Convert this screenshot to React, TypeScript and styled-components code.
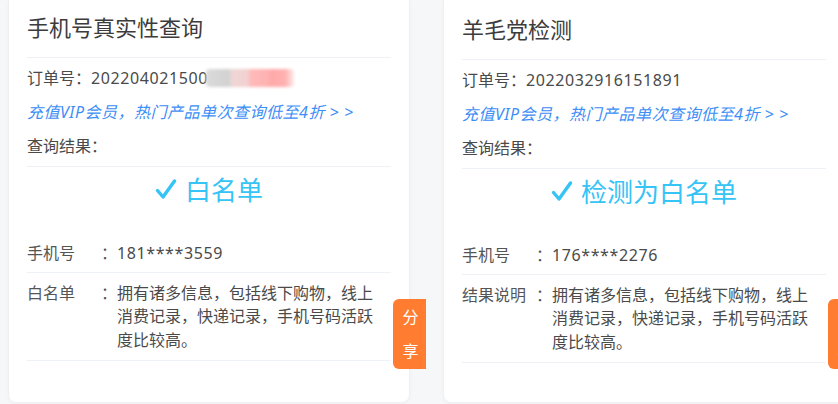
import React from "react";
import styled, { createGlobalStyle } from "styled-components";

const GlobalStyle = createGlobalStyle`
  html, body {
    margin: 0;
    padding: 0;
    background: #f6f7f9;
    overflow: hidden;
  }
  body {
    font-family: "Noto Sans", "Noto Sans CJK SC", sans-serif;
    color: #4a4a4a;
  }
`;

const Page = styled.div`
  display: flex;
  width: 838px;
  height: 404px;
  overflow: hidden;
`;

const Panel = styled.div<{ $width: number; $left: number }>`
  flex: 0 0 ${p => p.$width}px;
  padding-left: ${p => p.$left}px;
  box-sizing: border-box;
`;

const Card = styled.div<{ $shift: number }>`
  position: relative;
  width: 402px;
  height: 403px;
  box-sizing: border-box;
  padding: ${p => p.$shift}px 18px 0;
  background: #ffffff;
  border: 1px solid #eef0f4;
  border-top: none;
  border-radius: 0 0 8px 8px;
  box-shadow: 0 1px 4px rgba(0, 0, 0, 0.03);
`;

const TitleBar = styled.div`
  height: 57px;
  line-height: 55px;
  font-size: 22px;
  color: #3c3c3c;
  border-bottom: 1px solid #eef1f5;
`;

const InfoBlock = styled.div`
  display: flex;
  flex-direction: column;
  gap: 10px;
  padding: 8px 0 8px;
  border-bottom: 1px solid #eef1f5;
`;

const Line = styled.div`
  font-size: 16px;
  line-height: 24px;
  color: #4a4a4a;
  white-space: nowrap;
`;

const Digits = styled.span`
  letter-spacing: 0.6px;
`;

const Masked = styled.span`
  display: inline-block;
  vertical-align: middle;
  width: 88px;
  height: 18px;
  margin-left: -2px;
  margin-top: -3px;
  background: linear-gradient(
    90deg,
    #dadada 0%,
    #d2d2d2 26%,
    #f0d6d6 30%,
    #f2d0d0 48%,
    #ffbaba 50%,
    #ffb2b2 70%,
    #ffa9a9 74%,
    #ffb0b0 90%,
    #ffecec 100%
  );
  filter: blur(1.5px);
  border-radius: 4px;
`;

const VipLink = styled.div`
  font-size: 16px;
  line-height: 24px;
  letter-spacing: 0.5px;
  color: #3d8ef6;
  font-style: italic;
  white-space: nowrap;
`;

const Verdict = styled.div`
  display: flex;
  justify-content: center;
  align-items: center;
  gap: 8px;
  height: 40px;
  margin-top: 2px;
  font-size: 26px;
  color: #36c3f5;
`;

const CheckMark = styled.svg`
  width: 22px;
  height: 22px;
`;

const FieldRow = styled.div<{ $top: number; $bottom: number }>`
  display: grid;
  grid-template-columns: 74px 16px 266px;
  padding-top: ${p => p.$top}px;
  padding-bottom: ${p => p.$bottom}px;
  font-size: 16px;
  line-height: 23.5px;
  color: #4a4a4a;
  border-bottom: 1px solid #eef1f5;
`;

const FieldLabel = styled.span`
  color: #555;
  white-space: nowrap;
`;

const Colon = styled.span`
  color: #555;
`;

const FieldValue = styled.span`
  word-break: break-all;
`;

const ShareTab = styled.div<{ $top: number }>`
  position: absolute;
  right: -17px;
  top: ${p => p.$top}px;
  width: 33px;
  height: 70px;
  box-sizing: border-box;
  padding-left: 2px;
  display: flex;
  flex-direction: column;
  align-items: center;
  justify-content: center;
  background: #ff7c30;
  border-radius: 6px 0 0 6px;
  color: #ffffff;
  font-size: 16px;
  line-height: 34px;
`;

type Result = {
  title: string;
  orderNo: string;
  masked?: boolean;
  verdict: string;
  phone: string;
  descLabel: string;
  desc: string;
  shift: number;
};

const results: Result[] = [
  {
    title: "手机号真实性查询",
    orderNo: "202204021500",
    masked: true,
    verdict: "白名单",
    phone: "181****3559",
    descLabel: "白名单",
    desc: "拥有诸多信息，包括线下购物，线上消费记录，快递记录，手机号码活跃度比较高。",
    shift: 0,
  },
  {
    title: "羊毛党检测",
    orderNo: "2022032916151891",
    verdict: "检测为白名单",
    phone: "176****2276",
    descLabel: "结果说明",
    desc: "拥有诸多信息，包括线下购物，线上消费记录，快递记录，手机号码活跃度比较高。",
    shift: 2,
  },
];

const ResultCard: React.FC<{ data: Result }> = ({ data }) => (
  <Card $shift={data.shift}>
    <TitleBar>{data.title}</TitleBar>
    <InfoBlock>
      <Line>
        订单号：<Digits>{data.orderNo}</Digits>
        {data.masked && <Masked />}
      </Line>
      <VipLink>充值VIP会员，热门产品单次查询低至4折 &gt; &gt;</VipLink>
      <Line>查询结果：</Line>
    </InfoBlock>
    <Verdict>
      <CheckMark viewBox="0 0 22 22">
        <path
          d="M2.5 12.5 L8 19 L19.5 3"
          fill="none"
          stroke="#36c3f5"
          strokeWidth="3.4"
          strokeLinecap="round"
          strokeLinejoin="round"
        />
      </CheckMark>
      {data.verdict}
    </Verdict>
    <FieldRow $top={33} $bottom={6}>
      <FieldLabel>手机号</FieldLabel>
      <Colon>：</Colon>
      <Digits>{data.phone}</Digits>
    </FieldRow>
    <FieldRow $top={9} $bottom={8}>
      <FieldLabel>{data.descLabel}</FieldLabel>
      <Colon>：</Colon>
      <FieldValue>{data.desc}</FieldValue>
    </FieldRow>
    <ShareTab $top={299}>
      <span>分</span>
      <span>享</span>
    </ShareTab>
  </Card>
);

const App: React.FC = () => (
  <>
    <GlobalStyle />
    <Page>
      <Panel $width={427} $left={8}>
        <ResultCard data={results[0]} />
      </Panel>
      <Panel $width={411} $left={16}>
        <ResultCard data={results[1]} />
      </Panel>
    </Page>
  </>
);

export default App;
